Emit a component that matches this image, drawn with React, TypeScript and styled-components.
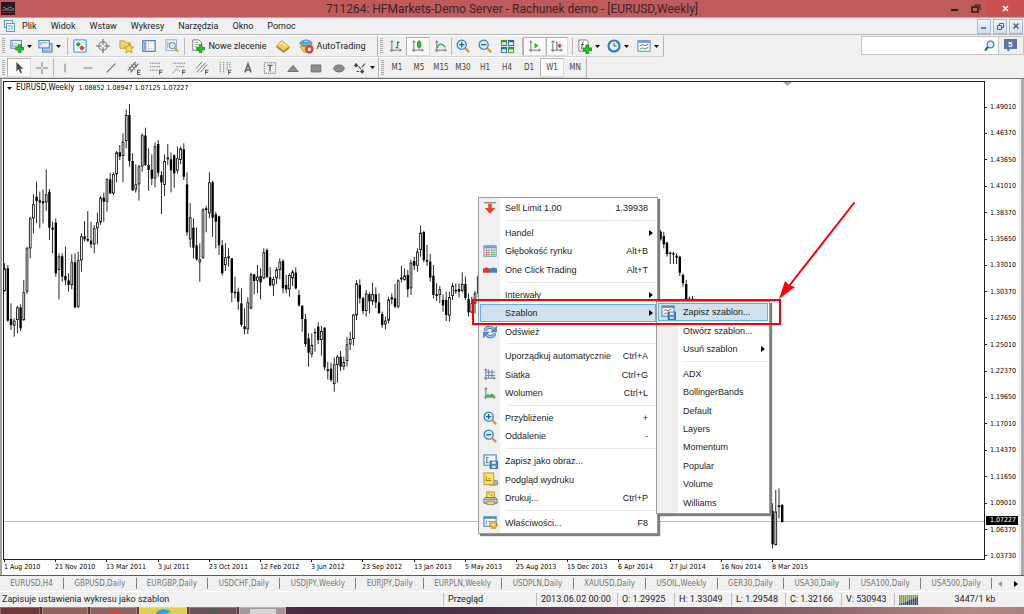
import React from 'react';
import styled, { createGlobalStyle, css } from 'styled-components';

const ui = '"Roboto", "Open Sans", sans-serif';
const tiny = '"DejaVu Sans Condensed", "DejaVu Sans", sans-serif';
const menuFont = '"Liberation Sans", sans-serif';

const Global = createGlobalStyle`
  *, *::before, *::after { box-sizing: border-box; }
  body { margin: 0; background: #f0f0f0; font-family: ${ui}; font-size: 9px; color: #1c1c1c; overflow: hidden; }
  button, input { font: inherit; color: inherit; margin: 0; padding: 0; border: 0; background: none; border-radius: 0; }
  ul, ol { list-style: none; margin: 0; padding: 0; }
  svg { display: block; flex: none; }
`;

const Shell = styled.div`
  display: flex;
  flex-direction: column;
  min-height: 100vh;
`;

/* ---------- title bar ---------- */
const TitleBar = styled.header`
  display: grid;
  grid-template-columns: 90px 1fr 90px;
  height: 18px;
  background: #c05b5d;
  border-bottom: 1px solid #d59a9a;
`;
const TitleIcon = styled.span`
  padding: 2px 0 0 1px;
`;
const Title = styled.h1`
  margin: 0;
  text-align: center;
  font: 400 12px/18px ${ui};
  color: #3d2426;
  white-space: nowrap;
`;
const WindowButtons = styled.div`
  display: flex;
  justify-content: flex-end;
`;
const WindowButton = styled.button<{ $close?: boolean }>`
  display: flex;
  align-items: center;
  justify-content: center;
  width: ${(p) => (p.$close ? 38 : 21)}px;
  height: 16px;
  background: ${(p) => (p.$close ? '#c9504f' : 'transparent')};
`;

/* ---------- menu bar ---------- */
const MenuBar = styled.nav`
  display: flex;
  align-items: center;
  height: 17px;
  padding-left: 4px;
  background: #f0f0f0;
  border-bottom: 1px solid #b8b8b8;
`;
const MenuItems = styled.ul`
  display: flex;
  flex: 1;
  gap: 14px;
  padding-left: 7px;
  font: 9px/16px ${ui};
`;
const MdiButtons = styled.div`
  display: flex;
  gap: 2px;
  padding-right: 1px;
`;
const MdiButton = styled.button`
  display: flex;
  align-items: center;
  justify-content: center;
  width: 14px;
  height: 15px;
  background: linear-gradient(#eaf3fc, #cfe0f1);
  border: 1px solid #a9bccf;
`;

/* ---------- toolbars ---------- */
const Toolbars = styled.div`
  display: flex;
  background: #f0f0f0;
`;
const ToolRows = styled.div`
  flex: 1;
`;
const ToolRow = styled.div<{ $h: number }>`
  display: flex;
  height: ${(p) => p.$h}px;
`;
const Strip = styled.div<{ $w: number }>`
  display: flex;
  align-items: center;
  width: ${(p) => p.$w}px;
  border-top: 1px solid #fff;
  border-right: 1px solid #b4b4b4;
  border-bottom: 1px solid #d2d2d2;
`;
const Grip = styled.span`
  width: 3px;
  height: 16px;
  margin: 0 2px;
  background: repeating-linear-gradient(#a9a9a9 0 1px, #f0f0f0 1px 2px);
`;
const Group = styled.div<{ $w: number; $sep?: boolean; $end?: number }>`
  display: flex;
  align-items: center;
  width: ${(p) => p.$w}px;
  height: 17px;
  padding-right: ${(p) => p.$end ?? 0}px;
  border-right: ${(p) => (p.$sep ? '1px solid #b9b9b9' : '0')};
`;
const Tool = styled.button<{ $on?: boolean }>`
  display: flex;
  flex: 1;
  align-items: center;
  justify-content: center;
  gap: 3px;
  height: 19px;
  white-space: nowrap;
  ${(p) =>
    p.$on &&
    css`
      background: #fafafa;
      border: 1px solid #dcdcdc;
      border-top-color: #b0b0b0;
      border-left-color: #b0b0b0;
    `}
`;
const TextTool = styled(Tool)<{ $w: number }>`
  flex: 0 0 ${(p) => p.$w}px;
`;
const Period = styled(Tool)`
  font: 8px/10px ${tiny};
  color: #444;
`;
const SearchBox = styled.form`
  display: flex;
  width: 163px;
  height: 19px;
  margin: 1px 0 0;
  border: 1px solid #c4c4c4;
`;
const SearchInput = styled.input`
  flex: 1;
  min-width: 0;
  background: #fff;
  outline: 0;
`;
const SearchButton = styled.button`
  width: 14px;
  background: #fff;
`;
const ChatButton = styled.button`
  display: flex;
  align-items: center;
  justify-content: center;
  width: 25px;
  border-left: 1px solid #c4c4c4;
`;

/* ---------- chart ---------- */
const Workspace = styled.main`
  position: relative;
  display: flex;
  flex: 1;
  min-height: 498px;
  padding: 2px 3px 0 3px;
  background: #fff;
  border-top: 1px solid #757575;
  border-bottom: 1px solid #5c5c5c;
  box-shadow: inset 2px 0 #a3a3a3, inset -3px 0 #ababab, inset -5px 0 #ececec;
`;
const PlotColumn = styled.div`
  flex: 1;
  min-width: 0;
`;
const Plot = styled.div`
  position: relative;
  height: 479px;
  border: 1px solid #222;
  overflow: hidden;
`;
const PlotTitle = styled.p`
  position: absolute;
  top: 1px;
  left: 3px;
  display: flex;
  align-items: center;
  gap: 4px;
  margin: 0;
  font: 8px/10px ${tiny};
  color: #000;
  white-space: nowrap;
`;
const PlotValues = styled.span`
  font-size: 7px;
`;
const PriceAxis = styled.ol`
  position: relative;
  display: flex;
  flex-direction: column;
  justify-content: space-between;
  width: 36px;
  height: 479px;
  padding-top: 22px;
  font: 7px/8px ${tiny};
  color: #000;
`;
const Price = styled.li`
  display: flex;
  align-items: center;
  gap: 3px;
  &::before {
    content: '';
    width: 2px;
    height: 1px;
    background: #222;
  }
`;
const CurrentPrice = styled.li`
  position: absolute;
  top: 435px;
  left: 1px;
  width: 32px;
  padding-left: 4px;
  line-height: 9px;
  background: #000;
  color: #fff;
`;

/* ---------- context menus ---------- */
const Popup = styled.ul<{ $x: number; $y: number; $w: number; $h: number }>`
  position: absolute;
  left: ${(p) => p.$x}px;
  top: ${(p) => p.$y}px;
  display: flex;
  flex-direction: column;
  width: ${(p) => p.$w}px;
  height: ${(p) => p.$h}px;
  padding: 1px;
  border: 1px solid #9a9a9a;
  background: linear-gradient(90deg, #f0f0f0 21px, #fff 21px);
  box-shadow: 2px 2px 1px #7d7d7d;
  font: 9px/12px ${menuFont};
`;
const Entry = styled.li`
  display: flex;
  flex: 3 3 0;
  min-height: 0;
`;
const EntryButton = styled.button<{ $on?: boolean }>`
  display: grid;
  grid-template-columns: 24px 1fr auto 7px;
  align-items: center;
  width: 100%;
  text-align: left;
  white-space: nowrap;
  border: 1px solid ${(p) => (p.$on ? '#63aeea' : 'transparent')};
  background: ${(p) => (p.$on ? '#d1e1ee' : 'transparent')};
`;
const EntryIcon = styled.span`
  padding-left: 2px;
`;
const EntryArrow = styled.span`
  padding-left: 1px;
`;
const Divider = styled.li`
  flex: 1 1 0;
  display: flex;
  align-items: center;
  padding-left: 26px;
  &::before {
    content: '';
    flex: 1;
    height: 1px;
    background: #e9e9e9;
  }
`;
const Frame = styled.div`
  position: absolute;
  left: 472px;
  top: 220px;
  width: 309px;
  height: 26px;
  border: 2px solid #fb0007;
  pointer-events: none;
`;
const Arrow = styled.svg`
  position: absolute;
  left: 776px;
  top: 120px;
`;

/* ---------- bottom bars ---------- */
const Tabs = styled.div`
  display: flex;
  align-items: center;
  height: 15px;
  background: #f0f0f0;
  font: 8px/12px ${tiny};
`;
const Tab = styled.button`
  flex: 1 1 auto;
  height: 11px;
  line-height: 11px;
  color: #757575;
  white-space: nowrap;
  border-right: 1px solid #7d7d7d;
`;
const TabArrows = styled.div`
  display: flex;
  justify-content: space-around;
  width: 32px;
`;
const StatusBar = styled.footer`
  display: flex;
  align-items: center;
  height: 16px;
  background: #f0f0f0;
  border-top: 1px solid #fdfdfd;
  font: 9px/13px ${ui};
  white-space: nowrap;
`;
const Cell = styled.span<{ $w?: number; $center?: boolean }>`
  display: flex;
  align-items: center;
  justify-content: ${(p) => (p.$center ? 'center' : 'flex-start')};
  flex: ${(p) => (p.$w ? `0 0 ${p.$w}px` : '1')};
  height: 13px;
  padding-left: ${(p) => (p.$w ? 4 : 2)}px;
  border-left: ${(p) => (p.$w && !p.$center ? '1px solid #bdbdbd' : '0')};
`;
const TaskBar = styled.div`
  display: flex;
  gap: 2px;
  height: 7px;
  overflow: hidden;
  background: linear-gradient(90deg, #5e2c33, #6d3f42 20%, #46293c 30%, #4d3346 48%, #6f4b58 65%, #8a636a 80%, #b58884 95%, #a87f80);
`;
const Task = styled.span<{ $c: string; $w: number }>`
  display: flex;
  justify-content: center;
  width: ${(p) => p.$w}px;
  background: ${(p) => p.$c};
  border: 1px solid rgba(255, 255, 255, 0.25);
  border-bottom: 0;
`;

/* ---------- icons ---------- */
const Icon = ({ s = 14, children }: { s?: number; children: React.ReactNode }) => (
  <svg width={s} height={s} viewBox="0 0 16 16" fill="none" aria-hidden="true">
    {children}
  </svg>
);
const Caret = () => (
  <svg width="5" height="3" viewBox="0 0 5 3" aria-hidden="true">
    <path d="M0 0h5L2.5 3z" fill="#111" />
  </svg>
);
const RightCaret = ({ c = '#000' }: { c?: string }) => (
  <svg width="4" height="6" viewBox="0 0 4 6" aria-hidden="true">
    <path d="M0 0l4 3-4 3z" fill={c} />
  </svg>
);
const Plus = () => <path d="M9.500 6.500h3v3h3v3h-3v3h-3v-3h-3v-3h3z" fill="#22c51f" stroke="#0a7d12" strokeWidth=".8" />;

const NewChart = () => (
  <Icon>
    <rect x="1" y="1.500" width="12" height="9" fill="#f4f9fe" stroke="#3f78ae" />
    <path d="M3 3v6M2 8h8M5 5h3" stroke="#7699bb" />
    <Plus />
  </Icon>
);
const Profiles = () => (
  <Icon s={15}>
    <rect x="5" y="5" width="10" height="9" fill="#bcd6ef" stroke="#3a74b4" />
    <rect x="1" y="1.500" width="11" height="8" fill="#eef6fd" stroke="#3a74b4" />
    <path d="M3 7V4M3 4h7M6 12h7" stroke="#7ba7d2" />
  </Icon>
);
const MarketWatch = () => (
  <Icon>
    <rect x="1" y="1" width="14" height="14" rx="1" fill="#fff" stroke="#5aa1dc" strokeWidth="1.500" />
    <path d="M3 6l3-3 3 3-3 3z" fill="#1fa335" />
    <path d="M7 10l3-3 3.500 3-3.500 3.500z" fill="#e2402c" />
    <path d="M10 4h3M3 11.500h3" stroke="#c3d7e8" />
  </Icon>
);
const Target = () => (
  <Icon>
    <circle cx="8" cy="8" r="4.800" stroke="#707070" strokeWidth="1.300" />
    <path d="M8 0v6.500M8 9.500V16M0 8h6.500M9.500 8H16" stroke="#707070" strokeWidth="1.300" />
  </Icon>
);
const StarFolder = () => (
  <Icon s={15}>
    <path d="M1 2h5l1.500 2H12v6H1z" fill="#f3d46a" stroke="#b98b1e" strokeWidth=".8" />
    <path d="M10.500 5l1.600 3.300 3.600.4-2.700 2.400.8 3.600-3.300-1.800-3.200 1.800.7-3.600-2.700-2.400 3.700-.4z" fill="#fbdc4c" stroke="#b58413" strokeWidth=".8" />
  </Icon>
);
const Navigator = () => (
  <Icon>
    <rect x="1" y="2" width="14" height="12" fill="#fdfdff" stroke="#3b6ea8" strokeWidth="1.300" />
    <rect x="2" y="3" width="3" height="10" fill="#75a8e0" />
    <path d="M7 5h1M7 8h1M7 11h1" stroke="#c44" />
    <path d="M9 5h5M9 8h4M9 11h5" stroke="#d6dde6" />
  </Icon>
);
const Tester = () => (
  <Icon>
    <rect x="1" y="1" width="12" height="12" fill="#f8fbfe" stroke="#7fa2c4" />
    <path d="M3 3v8M5 4v6M3 5h5" stroke="#8facc9" />
    <circle cx="8.500" cy="7.500" r="3.700" fill="#d5eafa" stroke="#57789a" />
    <path d="M11 10.500l4 4" stroke="#cf9a31" strokeWidth="2.200" />
  </Icon>
);
const NewOrder = () => (
  <Icon>
    <path d="M2 1h7l3 3v9H2z" fill="#fff" stroke="#6d6d6d" />
    <path d="M4 4h4M4 6.500h5M4 9h3" stroke="#888" />
    <Plus />
  </Icon>
);
const Gold = () => (
  <Icon>
    <path d="M1 7.500L6.500 2l8.500 6.500v2L8.500 15 1 9.500z" fill="#c58f1f" stroke="#8f6010" strokeWidth=".8" />
    <path d="M1 7.500L6.500 2l8.500 6.500-6.500 4.700z" fill="#f3cc5a" />
    <path d="M4 6.500L6.700 4l5 3.800" stroke="#fdeeb0" strokeWidth="1.200" />
  </Icon>
);
const AutoTrade = () => (
  <Icon s={15}>
    <ellipse cx="7.500" cy="4.500" rx="6.500" ry="3" fill="#68b2e8" stroke="#2b73ad" strokeWidth=".8" />
    <path d="M4 4c0-4 7-4 7 0z" fill="#a5d4f5" stroke="#2b73ad" strokeWidth=".8" />
    <path d="M1 8l7 0 6-1-2 7H5z" fill="#f3cd53" stroke="#b88b1c" strokeWidth=".8" />
    <circle cx="11" cy="11" r="4.500" fill="#e23a24" />
    <rect x="9.300" y="9.300" width="3.400" height="3.400" fill="#fff" />
  </Icon>
);
const Axes = ({ children }: { children?: React.ReactNode }) => (
  <Icon s={13}>
    <path d="M3.500 1v14M1 12.500h14M2 3l1.500-2L5 3M13 11l2 1.500-2 1.500" stroke="#666" strokeWidth="1.100" />
    {children}
  </Icon>
);
const BarsIcon = () => (
  <Axes>
    <path d="M10.500 1.500v9M8 9.500h2.500M10.500 3H13" stroke="#21982a" strokeWidth="1.500" />
  </Axes>
);
const CandleIcon = () => (
  <Axes>
    <path d="M10 0v12" stroke="#128a1c" />
    <rect x="8" y="2" width="4" height="7" rx="1" fill="#27c52f" stroke="#128a1c" />
  </Axes>
);
const LineIcon = () => (
  <Axes>
    <path d="M4 10c2-6 5-7 10-1" stroke="#21982a" strokeWidth="1.300" />
  </Axes>
);
const Zoom = ({ plus }: { plus?: boolean }) => (
  <Icon>
    <path d="M10 10l5 5" stroke="#d3a032" strokeWidth="2.800" />
    <circle cx="6.500" cy="6.500" r="5.200" fill="#d9edfc" stroke="#2f7bc4" strokeWidth="1.400" />
    <path d={plus ? 'M3.500 6.500h6M6.500 3.500v6' : 'M3.500 6.500h6'} stroke="#1f62a8" strokeWidth="1.500" />
  </Icon>
);
const Tile = () => (
  <Icon s={15}>
    <rect x="1" y="1" width="6.500" height="6.500" fill="#3f8f35" />
    <rect x="8.500" y="1" width="6.500" height="6.500" fill="#2c66b0" />
    <rect x="1" y="8.500" width="6.500" height="6.500" fill="#2c66b0" />
    <rect x="8.500" y="8.500" width="6.500" height="6.500" fill="#3f8f35" />
    <path d="M2 3.500h4.500v3H2zM9.500 11h4.500v3H9.500z" fill="#d9f0d0" />
    <path d="M9.500 3.500H14v3H9.500zM2 11h4.500v3H2z" fill="#e0edfa" />
  </Icon>
);
const AutoScroll = () => (
  <Axes>
    <path d="M8 3.500l5 3.500-5 3.500z" fill="#27b82f" />
  </Axes>
);
const Shift = () => (
  <Axes>
    <path d="M8.500 2v10" stroke="#4d6a8d" strokeWidth="1.300" />
    <path d="M15 7h-3M12.500 4.500L9.500 7l3 2.500z" stroke="#c9472a" fill="#c9472a" />
  </Axes>
);
const Indicators = () => (
  <Icon s={15}>
    <path d="M2 1h8l2 2v10H2z" fill="#fff" stroke="#777" />
    <path d="M7 3c-2 0-1 8-3 8M4.500 6h3" stroke="#444" />
    <Plus />
  </Icon>
);
const Clock = () => (
  <Icon>
    <circle cx="8" cy="8" r="6.300" fill="#e9f4fd" stroke="#2c7cc9" strokeWidth="2.500" />
    <path d="M8 4.500V8h3" stroke="#333" />
  </Icon>
);
const Template = () => (
  <Icon>
    <rect x="1" y="2" width="14" height="12" fill="#fafdff" stroke="#3f7dbc" />
    <rect x="1" y="2" width="14" height="2.500" fill="#6ba5dc" />
    <path d="M3 8l3-1.500 3 1 4-1.500" stroke="#b33a2a" />
    <path d="M3 12l3-2 3 1.500 4-2" stroke="#1f8c3a" />
  </Icon>
);
const gray = '#686868';
const Small = ({ d, fill, w = 1 }: { d: string; fill?: boolean; w?: number }) => (
  <Icon>
    <path d={d} stroke={gray} fill={fill ? '#8c8c8c' : 'none'} strokeWidth={w} />
  </Icon>
);
const Pointer = () => (
  <Icon>
    <path d="M5 1v11l2.600-2.500L9.500 14l2-.9-2-4.200H13z" fill="#4a4a4a" />
  </Icon>
);
const F = 'M12 15.500v-5h3.500M12 13h3';
const Channel = () => <Small d="M1 11L10 1M4 13L13 3M2 7l4 5M5 4l4 6M8 2l3 5M15.500 10.500H12v5h3.500M12 13h3" w={1.2} />;
const Dashes = ({ d }: { d: string }) => (
  <Icon>
    <path d={d} stroke={gray} strokeDasharray="1.500 1" />
    <path d={F} stroke={gray} strokeWidth="1.200" />
  </Icon>
);
const FiboChannel = () => (
  <Icon>
    <path d="M1 9l7-8M2 13L12 2M6 13l8-9" stroke={gray} />
    <path d={F} stroke={gray} strokeWidth="1.200" />
  </Icon>
);
const TextIcon = () => <Small d="M4.500 13L8 3.500 11.500 13M5.500 10h5" w={2} />;
const LabelIcon = () => (
  <Icon>
    <rect x="1.500" y="2" width="13" height="12" stroke={gray} strokeDasharray="1.500 1" />
    <path d="M5 5h6M8 5v7" stroke={gray} strokeWidth="1.600" />
  </Icon>
);
const Arrows = () => (
  <Icon>
    <path d="M1 5l2.500-3L6 5 3.500 7.500zM8 12l2.500-3 2.500 3-2.500 2.500z" fill="#4a4a4a" />
    <path d="M6 6l3 3M10 7l4-4M4 12h3" stroke="#4a4a4a" strokeWidth="1.200" />
  </Icon>
);

const SellIcon = () => (
  <Icon>
    <path d="M1 2h14" stroke="#555" />
    <path d="M6 3h4v5h4l-6 6.500L2 8h4z" fill="#e0452d" />
  </Icon>
);
const DepthIcon = () => (
  <Icon>
    <rect x="1" y="2" width="14" height="12" fill="#eaf3fb" stroke="#5a88b5" />
    <path d="M1.500 2.500h13V5h-13z" fill="#5f9ad2" />
    <path d="M3 7h2M3 9.500h2M3 12h2M6 7h1.500M6 9.500h1.500M6 12h1.500" stroke="#c0392b" strokeWidth="1.500" />
    <path d="M9 7h2M9 9.500h2M9 12h2M12 7h1.500M12 9.500h1.500M12 12h1.500" stroke="#2f9a3d" strokeWidth="1.500" />
  </Icon>
);
const OneClick = () => (
  <Icon>
    <path d="M0 6h2l1-1h2l1 1h2v5H0z" fill="#e0392c" />
    <path d="M8 6h2l1-1h2l1 1h2v5H8z" fill="#3b80c8" />
  </Icon>
);
const Refresh = () => (
  <Icon>
    <path d="M2.500 6.500C3.500 2 9.500 1 12 5" stroke="#2c659d" strokeWidth="3.400" />
    <path d="M13.500 9.500C12.500 14 6.500 15 4 11" stroke="#2c659d" strokeWidth="3.400" />
    <path d="M15.500 1.500v6.500H9z" fill="#4b8dcb" stroke="#2c659d" strokeWidth=".6" />
    <path d="M.5 14.500V8H7z" fill="#4b8dcb" stroke="#2c659d" strokeWidth=".6" />
    <path d="M2.500 6.500C3.500 2 9.500 1 12 5M13.500 9.500C12.500 14 6.500 15 4 11" stroke="#93c4ec" strokeWidth="2" />
  </Icon>
);
const GridIcon = () => (
  <Axes>
    <path d="M7 2v10M11 2v10M4 5h11M4 9h11" stroke="#3c6ea5" />
  </Axes>
);
const VolumeIcon = () => (
  <Axes>
    <path d="M4 12V9.500l2-.5 2 1 2-1.500 1-.5 2 1.500 1 0V12z" fill="#26b534" />
  </Axes>
);
const Disk = () => (
  <>
    <rect x="7.500" y="7.500" width="8" height="8" fill="#4d88c7" stroke="#25588f" strokeWidth=".8" />
    <path d="M9.500 8h4v2.500h-4z" fill="#eaf4fd" />
    <path d="M9.500 12.500h4V15h-4z" fill="#cfe0f1" />
  </>
);
const SaveImage = () => (
  <Icon s={15}>
    <rect x="1" y="1" width="13" height="11" fill="#f6faff" stroke="#4d8ac4" strokeWidth="1.200" />
    <path d="M4 3v7M3 9h3M4 4h2" stroke="#4d6a8d" />
    <Disk />
  </Icon>
);
const Preview = () => (
  <Icon s={15}>
    <rect x="7" y="9" width="8.500" height="5" rx="1" fill="#b5b5b5" stroke="#777" strokeWidth=".8" />
    <rect x="1" y="1" width="10.500" height="12.500" fill="#fbe36a" stroke="#bf9420" />
    <path d="M3.500 4v6M3 9h6M6 7h2" stroke="#a67c12" />
  </Icon>
);
const Printer = () => (
  <Icon s={15}>
    <path d="M4 1h8v6H4z" fill="#fbe36a" stroke="#bf9420" />
    <path d="M6 3h1M8 4.500h2" stroke="#8a6a12" />
    <path d="M2.500 7h11L15 9v4H1V9z" fill="#cfcfcf" stroke="#666" />
    <path d="M4 11h8v3.500H4z" fill="#f1d968" stroke="#777" strokeWidth=".8" />
    <path d="M2 9h12" stroke="#8d8d8d" />
  </Icon>
);
const Properties = () => (
  <Icon s={15}>
    <rect x="1" y="2" width="13" height="10" fill="#f6faff" stroke="#4d8ac4" strokeWidth="1.200" />
    <path d="M1 3h13" stroke="#4d8ac4" strokeWidth="2" />
    <path d="M3.500 6v4M6 7h2" stroke="#4d6a8d" />
    <circle cx="11" cy="10.500" r="3.800" fill="#f0c040" stroke="#b5851a" strokeDasharray="2 1" strokeWidth="1.400" />
    <circle cx="11" cy="10.500" r="1.200" fill="#fff4c8" />
  </Icon>
);
const SaveTemplate = () => (
  <Icon s={15}>
    <rect x="1" y="1" width="13" height="11" fill="#f6faff" stroke="#4d8ac4" strokeWidth="1.200" />
    <path d="M1 2h13" stroke="#4d8ac4" strokeWidth="2" />
    <path d="M3 6l2-1 2 1 4-1.500" stroke="#c0392b" />
    <path d="M3 10l2-1.500 2 1" stroke="#1f8c3a" />
    <Disk />
  </Icon>
);

/* ---------- candle data ---------- */
/* each bar: high, low, body top, body bottom, rising (thirds of a pixel, growing downwards) */
type Bar = [number, number, number, number, number?];
const runs: { from: number; base: number; bars: Bar[] }[] = [
  {
    from: 0,
    base: 13,
    bars: [
      [505, 590, 520, 588, 1], [510, 680, 520, 677], [625, 705, 672, 690], [670, 725, 677, 692, 1], [632, 715, 637, 675, 1],
      [628, 708, 637, 700], [555, 678, 592, 675, 1], [455, 597, 460, 590, 1], [365, 490, 370, 460, 1], [298, 415, 328, 370, 1],
      [260, 385, 305, 318], [290, 400, 316, 322], [283, 385, 319, 325], [223, 348, 298, 322, 1], [282, 435, 290, 398],
      [380, 475, 398, 404], [370, 545, 383, 535], [475, 613, 484, 525, 1], [475, 560, 484, 545], [455, 570, 543, 556],
      [535, 590, 556, 570], [478, 583, 502, 570, 1], [475, 640, 502, 637], [470, 640, 496, 635, 1], [415, 530, 424, 496, 1],
      [378, 440, 424, 433], [348, 440, 432, 437], [380, 460, 437, 448], [390, 475, 400, 448, 1], [353, 448, 382, 400, 1],
      [303, 390, 308, 382, 1], [293, 380, 308, 320], [250, 350, 253, 320, 1], [233, 297, 253, 295], [232, 300, 238, 295, 1],
      [168, 262, 172, 238, 1], [150, 195, 172, 185], [115, 262, 140, 183, 1], [43, 160, 60, 138, 1], [27, 215, 60, 198],
      [175, 288, 198, 286], [208, 293, 268, 284, 1], [210, 317, 214, 268, 1], [115, 230, 121, 214, 1], [98, 213, 121, 210],
      [160, 287, 210, 225], [178, 270, 224, 251], [142, 277, 154, 250, 1], [135, 245, 147, 233], [228, 357, 240, 262],
      [178, 303, 198, 270, 1], [147, 210, 187, 193, 1], [172, 292, 193, 226], [178, 278, 181, 235], [155, 235, 190, 227, 1],
      [155, 208, 160, 195, 1], [145, 255, 163, 245], [232, 422, 268, 412], [325, 457, 367, 433, 1], [370, 490, 398, 458],
      [397, 497, 451, 493], [445, 560, 493, 502, 1], [340, 492, 343, 488, 1], [332, 412, 340, 345], [232, 370, 262, 355, 1],
      [257, 425, 262, 368], [350, 460, 358, 380], [362, 480, 364, 451], [435, 542, 451, 535], [445, 528, 487, 510, 1],
      [460, 515, 484, 490], [490, 622, 490, 593], [545, 610, 590, 595], [578, 645, 590, 620], [580, 695, 625, 690],
      [640, 718, 694, 703], [607, 717, 622, 703, 1], [533, 643, 538, 640, 1], [538, 598, 538, 558],
    ],
  },
  {
    from: 79,
    base: 78,
    bars: [
      [315, 400, 350, 362, 1], [325, 418, 348, 367], [265, 358, 277, 355, 1], [265, 355, 270, 351], [322, 380, 352, 376],
      [350, 408, 357, 376, 1], [322, 372, 328, 355, 1], [295, 358, 305, 330, 1], [298, 400, 303, 385], [345, 400, 375, 388],
      [340, 410, 345, 388, 1], [330, 378, 335, 355, 1], [322, 388, 338, 385], [390, 440, 405, 436], [437, 515, 437, 477],
      [462, 560, 477, 552], [520, 620, 535, 578], [520, 592, 555, 583, 1], [505, 575, 516, 520], [487, 552, 500, 540],
      [498, 587, 513, 540, 1], [502, 630, 503, 622], [605, 658, 628, 633], [608, 665, 626, 660], [592, 695, 613, 672, 1],
      [585, 668, 590, 615, 1], [573, 633, 590, 620], [590, 630, 606, 620, 1], [530, 620, 553, 603, 1], [515, 570, 537, 553, 1],
      [462, 557, 464, 537, 1], [360, 480, 370, 466, 1], [358, 430, 375, 415], [410, 463, 415, 453], [390, 470, 401, 453, 1],
      [397, 460, 402, 424], [368, 435, 402, 424, 1], [382, 445, 403, 427], [400, 460, 427, 460], [455, 503, 462, 495],
      [470, 508, 482, 493, 1], [410, 490, 418, 482, 1], [400, 433, 412, 418], [372, 445, 415, 440], [358, 445, 361, 440, 1],
      [317, 367, 353, 358, 1], [325, 362, 347, 360, 1], [330, 412, 345, 388], [300, 405, 308, 385, 1], [290, 330, 303, 317],
      [265, 335, 275, 317, 1], [197, 290, 218, 270, 1], [213, 307, 216, 300], [255, 318, 300, 305], [282, 365, 305, 353],
      [315, 415, 347, 405], [370, 423, 403, 408], [378, 430, 388, 405, 1], [403, 455, 420, 436], [395, 483, 420, 465],
      [395, 485, 411, 467, 1], [368, 420, 377, 408, 1], [370, 402, 390, 394], [370, 412, 387, 395], [337, 398, 372, 393, 1],
      [350, 420, 372, 414], [400, 470, 417, 457], [410, 460, 430, 457, 1], [393, 460, 400, 430, 1], [343, 412, 350, 400, 1],
    ],
  },
  {
    from: 205,
    base: 108,
    bars: [
      [120, 152, 125, 148], [125, 175, 138, 163], [155, 200, 158, 192], [185, 222, 188, 192], [185, 222, 190, 194],
      [190, 222, 197, 203], [197, 258, 200, 248], [250, 290, 255, 280], [270, 330, 282, 328], [320, 332, 326, 331],
      [318, 332, 326, 331],
    ],
  },
  {
    from: 240,
    base: 398,
    bars: [[70, 205, 93, 193], [30, 197, 95, 195, 1], [25, 115, 76, 81], [72, 128, 75, 126]],
  },
];

const Candles = () => (
  <svg width="100%" height="477" aria-label="EURUSD weekly candles" role="img">
    <path d="M0 439.500H3000" stroke="#bdbdbd" />
    <path d="M779 0h9l-4.500 4z" fill="#a8a8a8" />
    {runs.flatMap(({ from, base, bars }) =>
      bars.map(([hi, lo, top, bottom, up], i) => {
        const x = 0.6 + (from + i) * 3.2;
        const y = (v: number) => base + v / 3;
        const h = Math.max(1, (bottom - top) / 3);
        return (
          <g key={from + i}>
            <rect x={x - 0.45} y={y(hi)} width={0.9} height={(lo - hi) / 3} fill="#111" />
            {up ? (
              <rect x={x - 0.9} y={y(top) + 0.4} width={1.8} height={Math.max(0.6, h - 0.8)} fill="#fff" stroke="#000" strokeWidth={0.8} />
            ) : (
              <rect x={x - 1.2} y={y(top)} width={2.4} height={h} fill="#000" />
            )}
          </g>
        );
      })
    )}
  </svg>
);

const dates = ['1 Aug 2010', '21 Nov 2010', '13 Mar 2011', '3 Jul 2011', '23 Oct 2011', '12 Feb 2012', '3 Jun 2012', '23 Sep 2012', '13 Jan 2013', '5 May 2013', '25 Aug 2013', '15 Dec 2013', '6 Apr 2014', '27 Jul 2014', '16 Nov 2014', '8 Mar 2015'];
const TimeAxis = () => (
  <svg width="100%" height="15" fontFamily='"DejaVu Sans Condensed", "DejaVu Sans", sans-serif' fontSize="7">
    {dates.map((d, i) => (
      <g key={d}>
        <rect x={Math.round(1 + i * 51.2)} y="0" width="1" height="2" fill="#222" />
        <text x={Math.round(1 + i * 51.2)} y="9" fill="#000">
          {d}
        </text>
      </g>
    ))}
  </svg>
);

const prices = ['1.49010', '1.46370', '1.43650', '1.41010', '1.38370', '1.35650', '1.33010', '1.30370', '1.27650', '1.25010', '1.22370', '1.19650', '1.17010', '1.14370', '1.11650', '1.09010', '1.06370', '1.03730'];

type Item = { label: string; keys?: string; sub?: boolean; icon?: React.ReactNode; on?: boolean } | null;
const mainMenu: Item[] = [
  { label: 'Sell Limit 1.00', keys: '1.39938', icon: <SellIcon /> },
  null,
  { label: 'Handel', sub: true },
  { label: 'Głębokość rynku', keys: 'Alt+B', icon: <DepthIcon /> },
  { label: 'One Click Trading', keys: 'Alt+T', icon: <OneClick /> },
  null,
  { label: 'Interwały', sub: true },
  { label: 'Szablon', sub: true, on: true },
  { label: 'Odśwież', icon: <Refresh /> },
  null,
  { label: 'Uporządkuj automatycznie', keys: 'Ctrl+A' },
  { label: 'Siatka', keys: 'Ctrl+G', icon: <GridIcon /> },
  { label: 'Wolumen', keys: 'Ctrl+L', icon: <VolumeIcon /> },
  null,
  { label: 'Przybliżenie', keys: '+', icon: <Zoom plus /> },
  { label: 'Oddalenie', keys: '-', icon: <Zoom /> },
  null,
  { label: 'Zapisz jako obraz...', icon: <SaveImage /> },
  { label: 'Podgląd wydruku', icon: <Preview /> },
  { label: 'Drukuj...', keys: 'Ctrl+P', icon: <Printer /> },
  null,
  { label: 'Właściwości...', keys: 'F8', icon: <Properties /> },
];
const subMenu: Item[] = [
  { label: 'Zapisz szablon...', icon: <SaveTemplate />, on: true },
  { label: 'Otwórz szablon...' },
  { label: 'Usuń szablon', sub: true },
  null,
  ...['ADX', 'BollingerBands', 'Default', 'Layers', 'Momentum', 'Popular', 'Volume', 'Williams'].map((label) => ({ label })),
];

const PopupMenu = ({ items, x, y, w, h }: { items: Item[]; x: number; y: number; w: number; h: number }) => (
  <Popup $x={x} $y={y} $w={w} $h={h}>
    {items.map((it, i) =>
      it ? (
        <Entry key={i}>
          <EntryButton type="button" $on={it.on}>
            <EntryIcon>{it.icon}</EntryIcon>
            <span>{it.label}</span>
            <span>{it.keys}</span>
            <EntryArrow>{it.sub && <RightCaret />}</EntryArrow>
          </EntryButton>
        </Entry>
      ) : (
        <Divider key={i} />
      )
    )}
  </Popup>
);

const T = ({ name, on, children }: { name: string; on?: boolean; children: React.ReactNode }) => (
  <Tool type="button" aria-label={name} $on={on}>
    {children}
  </Tool>
);

export default function App() {
  return (
    <Shell>
      <Global />
      <TitleBar>
        <TitleIcon>
          <svg width="14" height="13" viewBox="0 0 14 13" aria-hidden="true">
            <rect width="14" height="13" fill="#241c1e" />
            <path d="M1 8h12M2 5l4 2 3-2 4 2" stroke="#8b7f80" fill="none" />
            <path d="M1 10.500h12" stroke="#7a2b2b" />
          </svg>
        </TitleIcon>
        <Title>711264: HFMarkets-Demo Server - Rachunek demo - [EURUSD,Weekly]</Title>
        <WindowButtons>
          <WindowButton type="button" aria-label="Minimize">
            <svg width="8" height="8"><path d="M0 6h7" stroke="#222" strokeWidth="2" /></svg>
          </WindowButton>
          <WindowButton type="button" aria-label="Restore">
            <svg width="10" height="9" fill="none" stroke="#33191a"><path d="M1 3h6v5H1z" strokeWidth="1.500" /><path d="M3 1h6v5" /></svg>
          </WindowButton>
          <WindowButton type="button" aria-label="Close" $close>
            <svg width="7" height="7"><path d="M1 1l5 5M6 1L1 6" stroke="#fff" strokeWidth="1.500" /></svg>
          </WindowButton>
        </WindowButtons>
      </TitleBar>

      <MenuBar>
        <svg width="11" height="12" viewBox="0 0 11 12" fill="none" aria-hidden="true">
          <rect x=".5" y=".5" width="8" height="7" fill="#eaf5fe" stroke="#5a9bd5" />
          <rect x="2.500" y="3.500" width="8" height="8" fill="#f4faff" stroke="#5a9bd5" />
          <path d="M4 6h5M5 10V8M8 10V7" stroke="#5a9bd5" />
        </svg>
        <MenuItems>
          {['Plik', 'Widok', 'Wstaw', 'Wykresy', 'Narzędzia', 'Okno', 'Pomoc'].map((m) => (
            <li key={m}><button type="button">{m}</button></li>
          ))}
        </MenuItems>
        <MdiButtons>
          <MdiButton type="button" aria-label="Minimize chart">
            <svg width="6" height="7"><path d="M0 5h5" stroke="#4d5a70" strokeWidth="1.500" /></svg>
          </MdiButton>
          <MdiButton type="button" aria-label="Restore chart">
            <svg width="7" height="7" fill="none" stroke="#4d5a70"><path d="M.5 2.500h4v4h-4zM2.500 2.500v-2h4v4h-2" /></svg>
          </MdiButton>
          <MdiButton type="button" aria-label="Close chart">
            <svg width="6" height="6"><path d="M.5.5l5 5M5.500.5l-5 5" stroke="#4d5a70" strokeWidth="1.500" /></svg>
          </MdiButton>
        </MdiButtons>
      </MenuBar>

      <Toolbars>
        <ToolRows>
          <ToolRow $h={22}>
            <Strip $w={378}>
              <Grip />
              <Group $w={61} $sep $end={4}>
                <T name="New chart"><NewChart /><Caret /></T>
                <T name="Profiles"><Profiles /><Caret /></T>
              </Group>
              <Group $w={117} $sep>
                <T name="Market watch"><MarketWatch /></T>
                <T name="Data window"><Target /></T>
                <T name="Navigator"><StarFolder /></T>
                <T name="Terminal"><Navigator /></T>
                <T name="Strategy tester"><Tester /></T>
              </Group>
              <Group $w={191} $end={4}>
                <TextTool type="button" $w={88}><NewOrder />Nowe zlecenie</TextTool>
                <T name="MetaEditor"><Gold /></T>
                <TextTool type="button" $w={80}><AutoTrade />AutoTrading</TextTool>
              </Group>
            </Strip>
            <Strip $w={286}>
              <Grip />
              <Group $w={67} $sep>
                <T name="Bar chart"><BarsIcon /></T>
                <T name="Candlesticks" on><CandleIcon /></T>
                <T name="Line chart"><LineIcon /></T>
              </Group>
              <Group $w={71} $sep $end={4}>
                <T name="Zoom in"><Zoom plus /></T>
                <T name="Zoom out"><Zoom /></T>
                <T name="Tile windows"><Tile /></T>
              </Group>
              <Group $w={50} $sep $end={4}>
                <T name="Auto scroll" on><AutoScroll /></T>
                <T name="Chart shift" on><Shift /></T>
              </Group>
              <Group $w={90}>
                <T name="Indicators"><Indicators /><Caret /></T>
                <T name="Periods"><Clock /><Caret /></T>
                <T name="Templates"><Template /><Caret /></T>
              </Group>
            </Strip>
          </ToolRow>
          <ToolRow $h={21}>
            <Strip $w={379}>
              <Grip />
              <Group $w={47} $sep>
                <T name="Cursor" on><Pointer /></T>
                <T name="Crosshair"><Small d="M8 1v6M8 9v6M1 8h6M9 8h6" /></T>
              </Group>
              <Group $w={296}>
                <T name="Vertical line"><Small d="M8 3v10" /></T>
                <T name="Horizontal line"><Small d="M3 8h10" /></T>
                <T name="Trendline"><Small d="M3 13L13 3" w={1.3} /></T>
                <T name="Channel"><Channel /></T>
                <T name="Fibonacci"><Dashes d="M1 2.500h12M1 6.500h12M1 10.500h9" /></T>
                <T name="Expansion"><Dashes d="M1 2.500h14M5 6.500h10M1 14l4-5 4 3" /></T>
                <T name="Fibonacci channel"><FiboChannel /></T>
                <T name="Time zones"><Dashes d="M2.500 1v13M6.500 1v13M10.500 1v9M13.500 1v7" /></T>
                <T name="Text"><TextIcon /></T>
                <T name="Label"><LabelIcon /></T>
                <T name="Triangle"><Small d="M2 12l6-7 6 7z" fill /></T>
                <T name="Rectangle"><Small d="M2.500 4.500h11v8h-11z" fill /></T>
                <T name="Ellipse"><Small d="M2 8.500a6 4 0 1 0 12 0a6 4 0 1 0-12 0z" fill /></T>
              </Group>
              <Group $w={27}>
                <T name="Arrows"><Arrows /><Caret /></T>
              </Group>
            </Strip>
            <Strip $w={208}>
              <Grip />
              <Group $w={200}>
                {['M1', 'M5', 'M15', 'M30', 'H1', 'H4', 'D1', 'W1', 'MN'].map((p) => (
                  <Period key={p} type="button" $on={p === 'W1'}>{p}</Period>
                ))}
              </Group>
            </Strip>
          </ToolRow>
        </ToolRows>
        <SearchBox role="search">
          <SearchInput aria-label="Search" />
          <SearchButton type="button" aria-label="Find">
            <svg width="11" height="12" viewBox="0 0 11 12" fill="none">
              <circle cx="6.500" cy="4.500" r="3.300" fill="#e2effb" stroke="#3f86cf" strokeWidth="1.300" />
              <path d="M4 7L1 10.500" stroke="#1f5fb0" strokeWidth="2.200" />
            </svg>
          </SearchButton>
          <ChatButton type="button" aria-label="5 messages">
            <svg width="14" height="13" viewBox="0 0 14 13">
              <path d="M0 0h13v10H6l-2 3-1-3H0z" fill="#5a74a9" />
              <text x="4" y="8" fontSize="8" fontWeight="700" fill="#fff" fontFamily="Liberation Sans, sans-serif">5</text>
            </svg>
          </ChatButton>
        </SearchBox>
      </Toolbars>

      <Workspace>
        <PlotColumn>
          <Plot>
            <Candles />
            <PlotTitle>
              <Caret />
              <span>EURUSD,Weekly</span>
              <PlotValues>1.08852 1.08947 1.07125 1.07227</PlotValues>
            </PlotTitle>
          </Plot>
          <TimeAxis />
        </PlotColumn>
        <PriceAxis>
          {prices.map((p) => (
            <Price key={p}>{p}</Price>
          ))}
          <CurrentPrice>1.07227</CurrentPrice>
        </PriceAxis>

        <PopupMenu items={mainMenu} x={478} y={118} w={180} h={337} />
        <PopupMenu items={subMenu} x={656} y={222} w={114} h={213} />
        <Frame />
        <Arrow width="82" height="102" viewBox="0 0 82 102" aria-hidden="true">
          <path d="M78 4L13 87" stroke="#fb0007" strokeWidth="2" strokeLinecap="round" />
          <path d="M3 100L9 82l4 4 6 2z" fill="#fb0007" />
        </Arrow>
      </Workspace>

      <Tabs>
        {['EURUSD,H4', 'GBPUSD,Daily', 'EURGBP,Daily', 'USDCHF,Daily', 'USDJPY,Weekly', 'EURJPY,Daily', 'EURPLN,Weekly', 'USDPLN,Daily', 'XAUUSD,Daily', 'USOIL,Weekly', 'GER30,Daily', 'USA30,Daily', 'USA100,Daily', 'USA500,Daily'].map((t) => (
          <Tab key={t} type="button">{t}</Tab>
        ))}
        <TabArrows>
          <svg width="4" height="6" viewBox="0 0 4 6"><path d="M4 0v6L0 3z" fill="#999" /></svg>
          <RightCaret />
        </TabArrows>
      </Tabs>

      <StatusBar>
        <Cell>Zapisuje ustawienia wykresu jako szablon</Cell>
        <Cell $w={93}>Przegląd</Cell>
        <Cell $w={81}>2013.06.02 00:00</Cell>
        <Cell $w={57}>O: 1.29925</Cell>
        <Cell $w={57}>H: 1.33049</Cell>
        <Cell $w={54}>L: 1.29548</Cell>
        <Cell $w={56}>C: 1.32166</Cell>
        <Cell $w={53}>V: 530943</Cell>
        <Cell $w={28}>
          <svg width="19" height="10" viewBox="0 0 19 10" aria-hidden="true">
            {[0, 1, 2, 3, 4, 5, 6, 7, 8, 9].map((n) => (
              <g key={n}>
                <rect x={n * 2} width="1.500" height={9 - n * 0.8} fill="#7fa136" />
                <rect x={n * 2} y={9 - n * 0.8} width="1.500" height={1 + n * 0.8} fill="#1f4a72" />
              </g>
            ))}
          </svg>
        </Cell>
        <Cell $w={102} $center>3447/1 kb</Cell>
      </StatusBar>

      <TaskBar>
        <Task $w={40} $c="#70363a" />
        <Task $w={46} $c="#92635a" />
        <Task $w={47} $c="#8e6260">
          <svg width="14" height="6"><circle cx="7" cy="8" r="6" fill="#d9463a" /></svg>
        </Task>
        <Task $w={48} $c="#e0cf52">
          <svg width="18" height="6"><path d="M2 6c1-6 12-6 15-2l-6 2z" fill="#2ba4e6" /></svg>
        </Task>
        <Task $w={48} $c="#6a5058">
          <svg width="14" height="6"><path d="M2 5l8-4v4z" fill="#1f7a3c" /></svg>
        </Task>
        <Task $w={47} $c="#a5979c">
          <svg width="28" height="6"><rect x="1" y="1" width="26" height="6" fill="#d8d4d8" /></svg>
        </Task>
      </TaskBar>
    </Shell>
  );
}
